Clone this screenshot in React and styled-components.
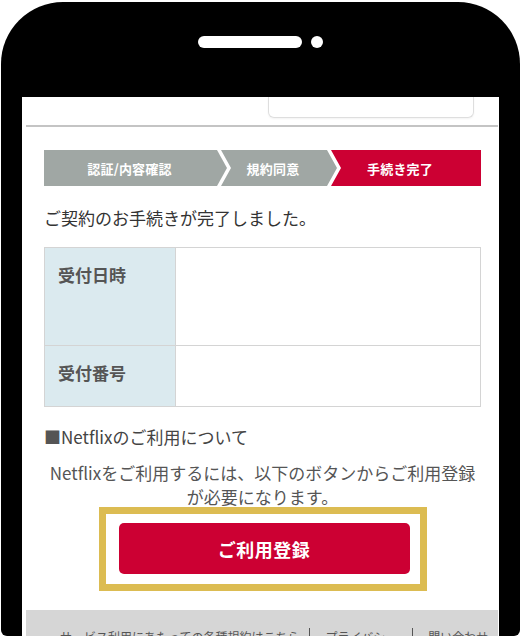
import React from 'react';
import styled, { createGlobalStyle, css } from 'styled-components';

const GlobalStyle = createGlobalStyle`
  html, body {
    margin: 0;
    background: #fff;
  }
  body {
    font-family: "Noto Sans CJK JP", "Noto Sans", sans-serif;
  }
  * { box-sizing: border-box; }
`;

const Phone = styled.div`
  width: 519px;
  height: 634px;
  margin: 2px 0 0 1px;
  padding: 0 21px;
  background: #000;
  border-radius: 62px 62px 6px 6px;
  display: flex;
  flex-direction: column;
  overflow: hidden;
`;

const TopBar = styled.div`
  height: 95px;
  flex: none;
  display: flex;
  justify-content: center;
  align-items: flex-start;
  gap: 9px;
  padding-top: 34px;
`;

const Speaker = styled.div`
  width: 104px;
  height: 12px;
  border-radius: 6px;
  background: #fff;
`;

const Camera = styled.div`
  width: 12px;
  height: 12px;
  border-radius: 50%;
  background: #fff;
`;

const Screen = styled.div`
  flex: 1;
  background: #fff;
  display: flex;
  flex-direction: column;
  overflow: hidden;
`;

const HeaderRow = styled.div`
  height: 21px;
  flex: none;
  display: flex;
  justify-content: flex-end;
  padding-right: 25px;
`;

const HeaderBox = styled.div`
  width: 206px;
  border: 1px solid #dedede;
  border-top: none;
  border-radius: 0 0 6px 6px;
  box-shadow: 0 1px 2px rgba(0, 0, 0, 0.05);
`;

const Rule = styled.div`
  height: 2px;
  flex: none;
  margin: 7px 1px 0 4px;
  background: #c4c4c4;
`;

const Main = styled.div`
  flex: none;
  margin: 0 1px 0 4px;
  padding: 23px 17px 0 18px;
  display: flex;
  flex-direction: column;
`;

const Steps = styled.div`
  display: flex;
  height: 36px;
`;

const TIP = 10;

const Step = styled.div`
  width: ${({ $w }) => $w}px;
  flex: none;
  margin-left: ${({ $first }) => ($first ? 0 : -6)}px;
  display: flex;
  align-items: center;
  justify-content: center;
  padding-right: 12px;
  background: ${({ $active }) => ($active ? '#cc0033' : '#a0a7a4')};
  color: #fff;
  font-size: 13px;
  font-weight: 700;
  letter-spacing: 0.2px;
  ${({ $first, $last }) => {
    const left = $first ? '0 0' : `0 0, ${TIP}px 50%, 0 100%`;
    const right = $last
      ? '100% 0, 100% 100%'
      : `calc(100% - ${TIP}px) 0, 100% 50%, calc(100% - ${TIP}px) 100%`;
    const points = $first
      ? `0 0, ${right}, 0 100%`
      : `0 0, ${right}, 0 100%, ${TIP}px 50%`;
    return css`clip-path: polygon(${points});`;
  }}
`;

const Heading = styled.p`
  margin: 19px 0 0;
  font-size: 17px;
  line-height: 25px;
  color: #333;
`;

const InfoTable = styled.table`
  margin-top: 17px;
  width: 100%;
  border-collapse: collapse;
  border: 1px solid #d4d4d4;
`;

const Row = styled.tr`
  height: ${({ $h }) => $h}px;
`;

const Label = styled.th`
  width: 131px;
  padding: 14px 13px;
  vertical-align: top;
  text-align: left;
  background: #dbeaef;
  border: 1px solid #d4d4d4;
  color: #555;
  font-size: 17px;
  font-weight: 700;
  line-height: 25px;
`;

const Value = styled.td`
  border: 1px solid #d4d4d4;
  background: #fff;
`;

const SubHeading = styled.p`
  margin: 17px 0 0;
  font-size: 17px;
  line-height: 25px;
  color: #444;

  span {
    color: #555;
  }
`;

const Notice = styled.p`
  margin: 12px 0 0;
  font-size: 17px;
  line-height: 24px;
  text-align: center;
  color: #555;
`;

const Highlight = styled.div`
  width: 328px;
  margin: -2px auto 0;
  padding: 9px 10px 10px 13px;
  border: 7px solid #dcbc52;
  background: #fff;
`;

const RegisterButton = styled.button`
  display: block;
  width: 100%;
  height: 51px;
  border: none;
  border-radius: 5px;
  background: #cc0033;
  color: #fff;
  font-family: inherit;
  font-size: 18px;
  font-weight: 700;
  letter-spacing: 0.5px;
  cursor: pointer;
`;

const Footer = styled.div`
  flex: 1;
  margin: 19px 1px 0 4px;
  padding: 18px 0 0 34px;
  background: #d6d6d6;
  display: flex;
  align-items: flex-start;
  white-space: nowrap;
`;

const FooterLink = styled.a`
  font-size: 12px;
  line-height: 18px;
  color: #555;
  text-decoration: none;
  padding: 0 15px;
  border-left: 1px solid #555;

  &:first-child {
    padding-left: 0;
    padding-right: 10px;
    border-left: none;
  }
`;

const steps = [
  { label: '認証/内容確認', w: 183 },
  { label: '規約同意', w: 116 },
  { label: '手続き完了', w: 150, active: true },
];

export default function App() {
  return (
    <>
      <GlobalStyle />
      <Phone>
        <TopBar>
          <Speaker />
          <Camera />
        </TopBar>
        <Screen>
          <HeaderRow>
            <HeaderBox />
          </HeaderRow>
          <Rule />
          <Main>
            <Steps>
              {steps.map((s, i) => (
                <Step
                  key={s.label}
                  $w={s.w}
                  $first={i === 0}
                  $last={i === steps.length - 1}
                  $active={s.active}
                >
                  {s.label}
                </Step>
              ))}
            </Steps>
            <Heading>ご契約のお手続きが完了しました。</Heading>
            <InfoTable>
              <tbody>
                <Row $h={98}>
                  <Label>受付日時</Label>
                  <Value />
                </Row>
                <Row $h={61}>
                  <Label>受付番号</Label>
                  <Value />
                </Row>
              </tbody>
            </InfoTable>
            <SubHeading>
              <span>■</span>Netflixのご利用について
            </SubHeading>
            <Notice>
              Netflixをご利用するには、以下のボタンからご利用登録
              <br />
              が必要になります。
            </Notice>
            <Highlight>
              <RegisterButton>ご利用登録</RegisterButton>
            </Highlight>
          </Main>
          <Footer>
            <FooterLink href="#">サービス利用にあたっての各種規約はこちら</FooterLink>
            <FooterLink href="#">プライバシー</FooterLink>
            <FooterLink href="#">問い合わせ</FooterLink>
          </Footer>
        </Screen>
      </Phone>
    </>
  );
}
